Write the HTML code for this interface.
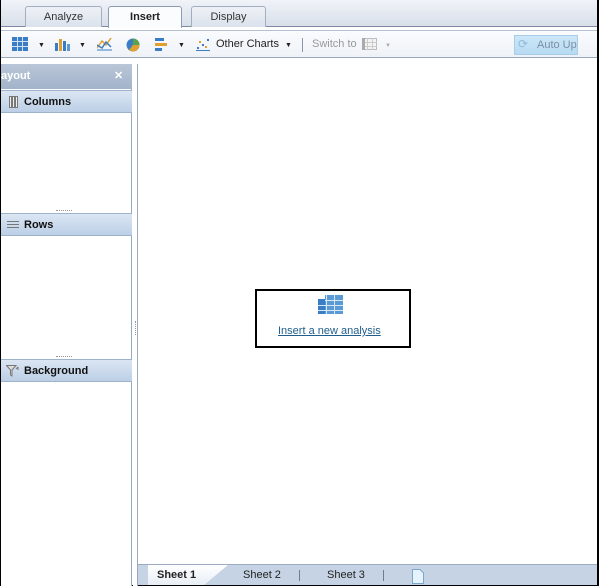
<!DOCTYPE html>
<html><head><style>
*{margin:0;padding:0;box-sizing:border-box}
body{width:600px;height:586px;background:#fff;font-family:"Liberation Sans",Arial,sans-serif;font-size:11px;color:#222;position:relative;overflow:hidden}
.abs{position:absolute}
.frame{left:0;top:0;width:599px;height:586px;border-right:2px solid #000;border-bottom:1px solid #000;border-left:1px solid #000}
.tabbar{left:1px;top:0;width:596px;height:27px;background:linear-gradient(#f0f3f8,#d8dfea);border-bottom:1px solid #7d8ba0}
.tab{top:6px;height:21px;border:1px solid #a3aebf;border-bottom:none;border-radius:3px 3px 0 0;background:linear-gradient(#eef1f6,#dbe2ec);text-align:center;line-height:20px;font-size:11px}
.toolbar{left:1px;top:30px;width:596px;height:28px;background:linear-gradient(#fafbfd,#eef2f7);border-top:1px solid #b5c0d0;border-bottom:1px solid #9aa8bc}
.tb{top:38px;font-size:11px}
.lp{left:1px;top:64px;width:131px;height:522px;background:#fff;border-right:1px solid #9aa8bc}
.hdr{left:0;width:131px;height:23px;background:linear-gradient(#dbe6f3,#bccfe6);border-top:1px solid #9fb2cc;border-bottom:1px solid #9fb2cc;font-weight:bold;font-size:11px;line-height:23px;padding-left:23px;color:#111}
.dots{left:55px;width:16px;height:1px;border-top:1px dotted #999}
</style></head><body>
<div class="abs frame"></div>
<div class="abs tabbar"></div>
<div class="abs tab" style="left:25px;width:77px;color:#333">Analyze</div>
<div class="abs tab" style="left:108px;width:74px;height:22px;background:#fbfcfe;font-weight:bold;border-color:#8e9cb2">Insert</div>
<div class="abs tab" style="left:191px;width:75px;color:#333">Display</div>
<div class="abs toolbar"></div>
<svg class="abs" style="left:12px;top:37px" width="16" height="14"><rect x="0" y="0" width="16" height="14" fill="#3b7dc4"/><g stroke="#cfe3f7" stroke-width="1"><line x1="0" y1="4.5" x2="16" y2="4.5"/><line x1="0" y1="9.5" x2="16" y2="9.5"/><line x1="5.5" y1="0" x2="5.5" y2="14"/><line x1="10.5" y1="0" x2="10.5" y2="14"/></g></svg>
<div class="abs" style="left:38px;top:42px;font-size:7px">▼</div>
<svg class="abs" style="left:55px;top:38px" width="15" height="13"><rect x="0" y="5" width="3" height="8" fill="#3b7dc4"/><rect x="4" y="1" width="3" height="12" fill="#e0a030"/><rect x="8" y="3" width="3" height="10" fill="#3b7dc4"/><rect x="12" y="6" width="3" height="7" fill="#5b9bd5"/></svg>
<div class="abs" style="left:79px;top:42px;font-size:7px">▼</div>
<svg class="abs" style="left:97px;top:37px" width="15" height="14"><polyline points="0,11 5,4 9,8 14,1" fill="none" stroke="#e0a030" stroke-width="1.5"/><polyline points="0,8 5,11 9,5 14,10" fill="none" stroke="#3b7dc4" stroke-width="1.5"/><line x1="0" y1="13" x2="15" y2="13" stroke="#3b7dc4"/></svg>
<svg class="abs" style="left:126px;top:38px" width="14" height="14"><circle cx="7" cy="7" r="6.5" fill="#3b7dc4"/><path d="M7 7 L7 0.5 A6.5 6.5 0 0 1 13.5 7Z" fill="#5aa34a"/><path d="M7 7 L13.5 7 A6.5 6.5 0 0 1 3 12Z" fill="#e0a030"/></svg>
<svg class="abs" style="left:155px;top:38px" width="12" height="13"><rect x="0" y="0" width="9" height="3" fill="#3b7dc4"/><rect x="0" y="5" width="12" height="3" fill="#e0a030"/><rect x="0" y="10" width="7" height="3" fill="#3b7dc4"/></svg>
<div class="abs" style="left:178px;top:42px;font-size:7px">▼</div>
<svg class="abs" style="left:196px;top:38px" width="14" height="13"><g fill="#3b7dc4"><rect x="1" y="9" width="2" height="2"/><rect x="6" y="6" width="2" height="2"/><rect x="11" y="1" width="2" height="2"/></g><g fill="#e0a030"><rect x="3" y="3" width="2" height="2"/><rect x="9" y="8" width="2" height="2"/></g><line x1="0" y1="12.5" x2="14" y2="12.5" stroke="#3b7dc4"/></svg>
<div class="abs tb" style="left:216px;color:#222">Other Charts</div>
<div class="abs" style="left:285px;top:42px;font-size:7px">▼</div>
<div class="abs" style="left:302px;top:38px;width:1px;height:14px;background:#8a97aa"></div>
<div class="abs tb" style="left:312px;color:#999">Switch to</div>
<svg class="abs" style="left:362px;top:38px" width="15" height="12"><rect x="0.5" y="0.5" width="14" height="11" fill="#f4f4f4" stroke="#bbb"/><g stroke="#ccc"><line x1="0" y1="4.5" x2="15" y2="4.5"/><line x1="0" y1="8.5" x2="15" y2="8.5"/><line x1="5.5" y1="0" x2="5.5" y2="12"/><line x1="10.5" y1="0" x2="10.5" y2="12"/></g><rect x="0" y="0" width="3" height="12" fill="#aaa"/></svg>
<div class="abs" style="left:385px;top:43px;font-size:6px;color:#aaa">▼</div>
<div class="abs" style="left:514px;top:35px;width:64px;height:20px;background:linear-gradient(#cde7f8,#b6dbf3);border:1px solid #a9cde8"></div>
<div class="abs" style="left:518px;top:37px;font-size:12px;color:#8fbbd8">⟳</div>
<div class="abs tb" style="left:537px;top:39px;color:#7c8fa4">Auto Up</div>
<div class="abs lp">
 <div class="abs" style="left:0;top:0;width:131px;height:25px;background:linear-gradient(#b9c6d8,#a3b3c9);color:#fff;font-weight:bold;font-size:11px;line-height:25px">ayout<span style="position:absolute;left:113px;font-size:11px">✕</span></div>
 <div class="abs hdr" style="top:26px">Columns</div>
 <svg class="abs" style="left:8px;top:32px" width="10" height="12"><g stroke="#777" fill="#eee"><rect x="0.5" y="0.5" width="2" height="11"/><rect x="3.5" y="0.5" width="2" height="11"/><rect x="6.5" y="0.5" width="2" height="11"/></g></svg>
 <div class="abs dots" style="top:146px"></div>
 <div class="abs hdr" style="top:149px">Rows</div>
 <svg class="abs" style="left:6px;top:156px" width="12" height="10"><g stroke="#777"><line x1="0" y1="1.5" x2="12" y2="1.5"/><line x1="0" y1="4.5" x2="12" y2="4.5"/><line x1="0" y1="7.5" x2="12" y2="7.5"/></g></svg>
 <div class="abs dots" style="top:292px"></div>
 <div class="abs hdr" style="top:295px">Background</div>
 <svg class="abs" style="left:5px;top:301px" width="14" height="12"><path d="M0.5 0.5 H10 L6 5 V11 L4.5 10 V5Z" fill="#ddd" stroke="#777"/><path d="M10 4 l2-2 M12 2 v3" stroke="#777" fill="none"/></svg>
</div>
<div class="abs" style="left:133px;top:64px;width:5px;height:522px;background:#fff;border-right:1px solid #9aa8bc"></div>
<div class="abs" style="left:135px;top:321px;width:1px;height:14px;border-left:1px dotted #999"></div>
<div class="abs" style="left:255px;top:289px;width:156px;height:59px;border:2px solid #000"></div>
<svg class="abs" style="left:318px;top:295px" width="25" height="19"><rect x="0" y="4" width="9" height="15" fill="#3b7dc4"/><rect x="7" y="0" width="18" height="19" fill="#5b9bd5"/><g stroke="#d6e8f8"><line x1="0" y1="10.5" x2="25" y2="10.5"/><line x1="7" y1="5.5" x2="25" y2="5.5"/><line x1="0" y1="15.5" x2="25" y2="15.5"/><line x1="8.5" y1="0" x2="8.5" y2="19"/><line x1="16.5" y1="0" x2="16.5" y2="19"/></g></svg>
<div class="abs" style="left:278px;top:325px;font-size:11px;color:#1e5d8c;text-decoration:underline">Insert a new analysis</div>
<div class="abs" style="left:138px;top:564px;width:459px;height:21px;background:#c5d3e4;border-top:1px solid #9aabc2"></div>
<div class="abs" style="left:148px;top:565px;width:80px;height:20px;background:linear-gradient(#fff,#e8eef6);clip-path:polygon(0 0,100% 0,70% 100%,0 100%)"></div>
<div class="abs" style="left:157px;top:569px;font-weight:bold">Sheet 1</div>
<div class="abs" style="left:243px;top:569px">Sheet 2</div>
<div class="abs" style="left:299px;top:570px;width:1px;height:11px;background:#6c7d96"></div>
<div class="abs" style="left:327px;top:569px">Sheet 3</div>
<div class="abs" style="left:383px;top:570px;width:1px;height:11px;background:#6c7d96"></div>
<svg class="abs" style="left:412px;top:569px" width="12" height="15"><path d="M0.5 0.5 H8 L11.5 4 V14.5 H0.5Z" fill="#e6f3fc" stroke="#7aa7cc"/></svg>
</body></html>
